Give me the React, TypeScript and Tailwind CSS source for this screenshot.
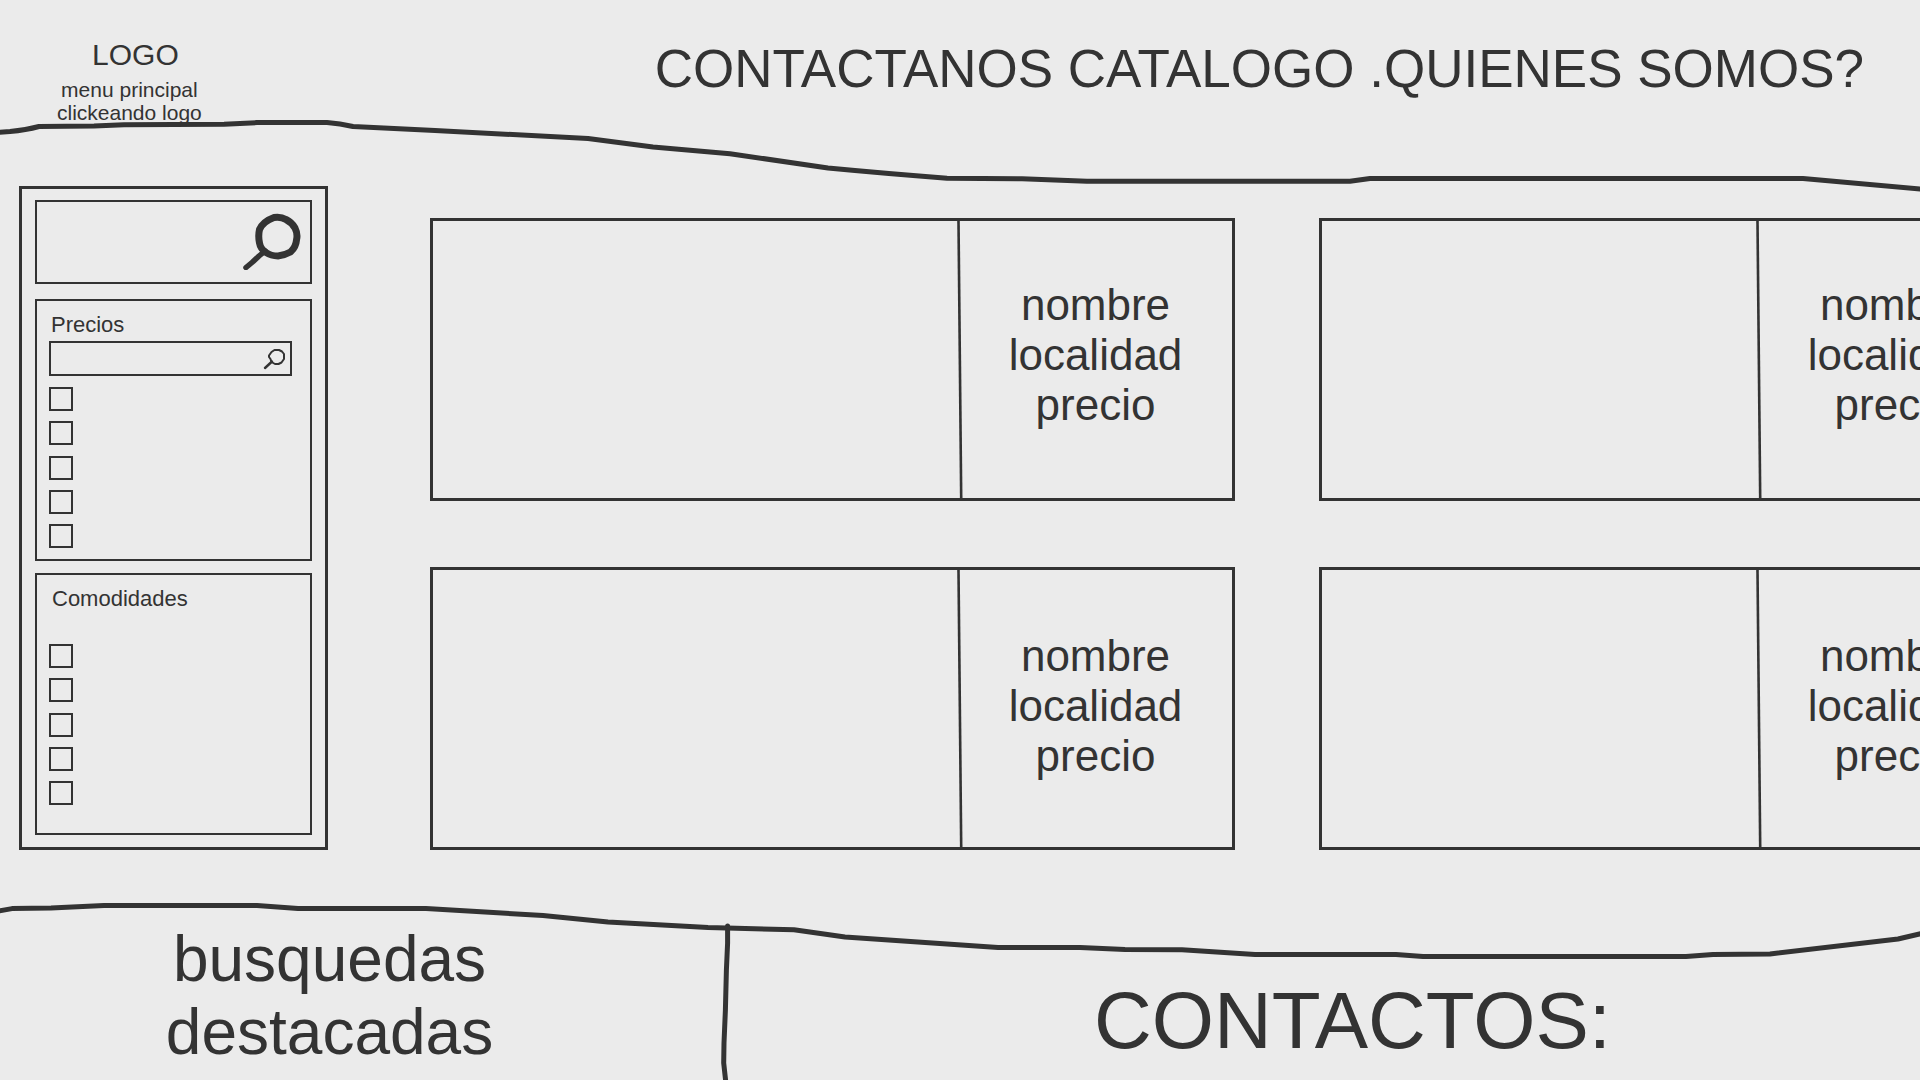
const INK = "#333333";

function HeaderLine() {
  return (
    <svg
      className="pointer-events-none absolute inset-x-0 top-[112px] h-[88px] w-full"
      viewBox="0 112 1920 88"
      preserveAspectRatio="none"
      fill="none"
      aria-hidden="true"
    >
      <path
        d="M-4 132.5 L10 131.5 Q26 130 39 126.5 L94 126 L124 124.7 L224 124.3 L257 122.6 L327 122.6 Q340 123.5 353 126.5 L435 130.5 L588 138.5 L653 147 L730 153.7 Q780 161 828 168 Q880 173 947 178.2 L1022 178.7 L1087 181.3 L1350 181.3 L1370 178.6 L1803 178.6 L1924 189.3"
        stroke={INK}
        strokeWidth="5"
        strokeLinejoin="round"
      />
    </svg>
  );
}

function FooterLine() {
  return (
    <svg
      className="pointer-events-none absolute inset-x-0 top-0 h-[70px] w-full"
      viewBox="0 895 1920 70"
      preserveAspectRatio="none"
      fill="none"
      aria-hidden="true"
    >
      <path
        d="M-4 911.5 L12 908.6 L51 908 L104 905.6 L257 905.6 L298 908.4 L426 908.6 L485 912 L543 915.5 L608 922 L708 927.5 L794 929.7 L845 937 L998 947.4 L1080 947.6 L1125 949.4 L1182 949.8 L1255 954.4 L1396 954.4 L1423 956.5 L1686 956.5 L1713 954.5 L1770 953.9 L1898 939 L1924 933"
        stroke={INK}
        strokeWidth="5"
        strokeLinejoin="round"
      />
    </svg>
  );
}

function FooterDivider() {
  return (
    <svg className="mt-[28px] h-[157px] w-3 shrink-0" viewBox="719 923 12 157" fill="none" aria-hidden="true">
      <path
        d="M727.6 926 L727.6 943 L726.4 970 L725.4 1010 L724 1043 L723.7 1063 L726 1084"
        stroke={INK}
        strokeWidth="5"
        strokeLinecap="round"
        strokeLinejoin="round"
      />
    </svg>
  );
}

function BigMagnifier() {
  return (
    <svg className="h-[58px] w-[60px]" viewBox="243 212 60 58" fill="none" aria-hidden="true">
      <path
        d="M275 217.5 Q282 216.5 287 219.5 Q293 222.5 296 228 Q299 234 297.500 240 Q297 247 291.500 252 Q285 255.500 279 256 Q272 256 267 252.500 Q261.500 249 260.500 243 Q259 236 260.500 229.500 Q264 221.500 275 217.5 Z"
        stroke={INK}
        strokeWidth="7"
        strokeLinejoin="round"
      />
      <path d="M266 251 L260 256 L253 262.500 L247 267.500" stroke={INK} strokeWidth="5.5" strokeLinecap="round" strokeLinejoin="round" />
    </svg>
  );
}

function SmallMagnifier() {
  return (
    <svg className="h-[22px] w-[24px]" viewBox="263 347 24 22" fill="none" aria-hidden="true">
      <path
        d="M274.500 349 H279 L282 350.500 L284 353 V358 L281.500 361.500 L278.500 363 H275 L271.500 361 L270.500 358 L269 356 V354.500 L271.500 351 Z"
        stroke={INK}
        strokeWidth="2"
        strokeLinejoin="round"
      />
      <path d="M272 360.500 L265 367" stroke={INK} strokeWidth="2.4" strokeLinecap="round" />
    </svg>
  );
}

function Checks({ group }: { group: string }) {
  return (
    <div className="flex h-[161px] flex-col justify-between">
      {[1, 2, 3, 4, 5].map((n) => (
        <input
          key={n}
          type="checkbox"
          aria-label={`${group} ${n}`}
          className="block size-6 appearance-none border-2 border-[#333333] checked:bg-[#333333]"
        />
      ))}
    </div>
  );
}

function Sidebar() {
  return (
    <aside className="flex w-[309px] shrink-0 flex-col border-3 border-[#333333] px-[13px] pt-[11px] pb-3">
      <form className="flex h-[84px] border-2 border-[#333333]">
        <input type="search" aria-label="Buscar" className="min-w-0 flex-1 bg-transparent px-3 text-[22px] outline-none" />
        <button type="button" aria-label="Buscar" className="mt-[10px] mr-2 self-start">
          <BigMagnifier />
        </button>
      </form>

      <section className="mt-[15px] h-[262px] border-2 border-[#333333] px-3 pt-[11px]">
        <label htmlFor="precios" className="block pl-[2px] text-[22px] leading-[26px]">
          Precios
        </label>
        <div className="mt-[3px] mr-[6px] flex h-[35px] items-center border-2 border-[#333333]">
          <input id="precios" type="text" className="min-w-0 flex-1 bg-transparent px-2 text-[18px] outline-none" />
          <button type="button" aria-label="Buscar precios" className="mr-[3px]">
            <SmallMagnifier />
          </button>
        </div>
        <div className="mt-[11px]">
          <Checks group="Precio" />
        </div>
      </section>

      <section className="mt-3 h-[262px] border-2 border-[#333333] px-3 pt-[11px]">
        <h2 className="pl-[3px] text-[22px] leading-[26px]">Comodidades</h2>
        <div className="mt-8">
          <Checks group="Comodidad" />
        </div>
      </section>
    </aside>
  );
}

function Card({ wide, low }: { wide?: boolean; low?: boolean }) {
  return (
    <article className={`flex h-[283px] shrink-0 border-3 border-[#333333] ${wide ? "w-[805px]" : "w-[715px]"}`}>
      <div className="flex-1" />
      <svg className="h-full w-[6px] shrink-0" viewBox="0 0 6 277" preserveAspectRatio="none" fill="none" aria-hidden="true">
        <path d="M1.500 0 L4.200 277" stroke={INK} strokeWidth="2.6" />
      </svg>
      <div
        className={`flex w-[269px] shrink-0 flex-col items-center pr-1 text-[44px] leading-[50px] ${low ? "pt-[61px]" : "pt-[59px]"}`}
      >
        <p>nombre</p>
        <p>localidad</p>
        <p>precio</p>
      </div>
    </article>
  );
}

export default function App() {
  return (
    <div className="flex min-h-screen flex-col overflow-hidden bg-[#ebebeb] font-['Liberation_Sans',Arial,sans-serif] text-[#333333]">
      <header className="relative flex h-[186px] items-start justify-between pt-[37px] pr-14 pl-[57px]">
        <a href="#inicio" className="flex flex-col items-center text-center">
          <span className="pl-3 text-[30px] leading-9">LOGO</span>
          <span className="mt-[5px] text-[21px] leading-[23px]">
            menu principal
            <br />
            clickeando logo
          </span>
        </a>
        <nav className="pt-[2px] text-[53px] leading-[60px] whitespace-nowrap">
          <a href="#contactanos">CONTACTANOS</a> <a href="#catalogo">CATALOGO</a> <a href="#quienes">.QUIENES SOMOS?</a>
        </nav>
        <HeaderLine />
      </header>

      <main className="flex pl-[19px]">
        <Sidebar />
        <div className="flex min-w-0 flex-1 flex-col gap-[66px] overflow-hidden pt-8 pl-[102px]">
          <div className="flex gap-[84px]">
            <Card wide />
            <Card />
          </div>
          <div className="flex gap-[84px]">
            <Card wide low />
            <Card low />
          </div>
        </div>
      </main>

      <footer className="relative mt-[45px] flex flex-1">
        <FooterLine />
        <h2 className="w-[719px] shrink-0 pt-7 pr-[60px] text-center text-[64px] leading-[73px]">
          busquedas
          <br />
          destacadas
        </h2>
        <FooterDivider />
        <h2 className="flex-1 pt-[81px] pl-[54px] text-center text-[80px] leading-[90px]">CONTACTOS:</h2>
      </footer>
    </div>
  );
}
